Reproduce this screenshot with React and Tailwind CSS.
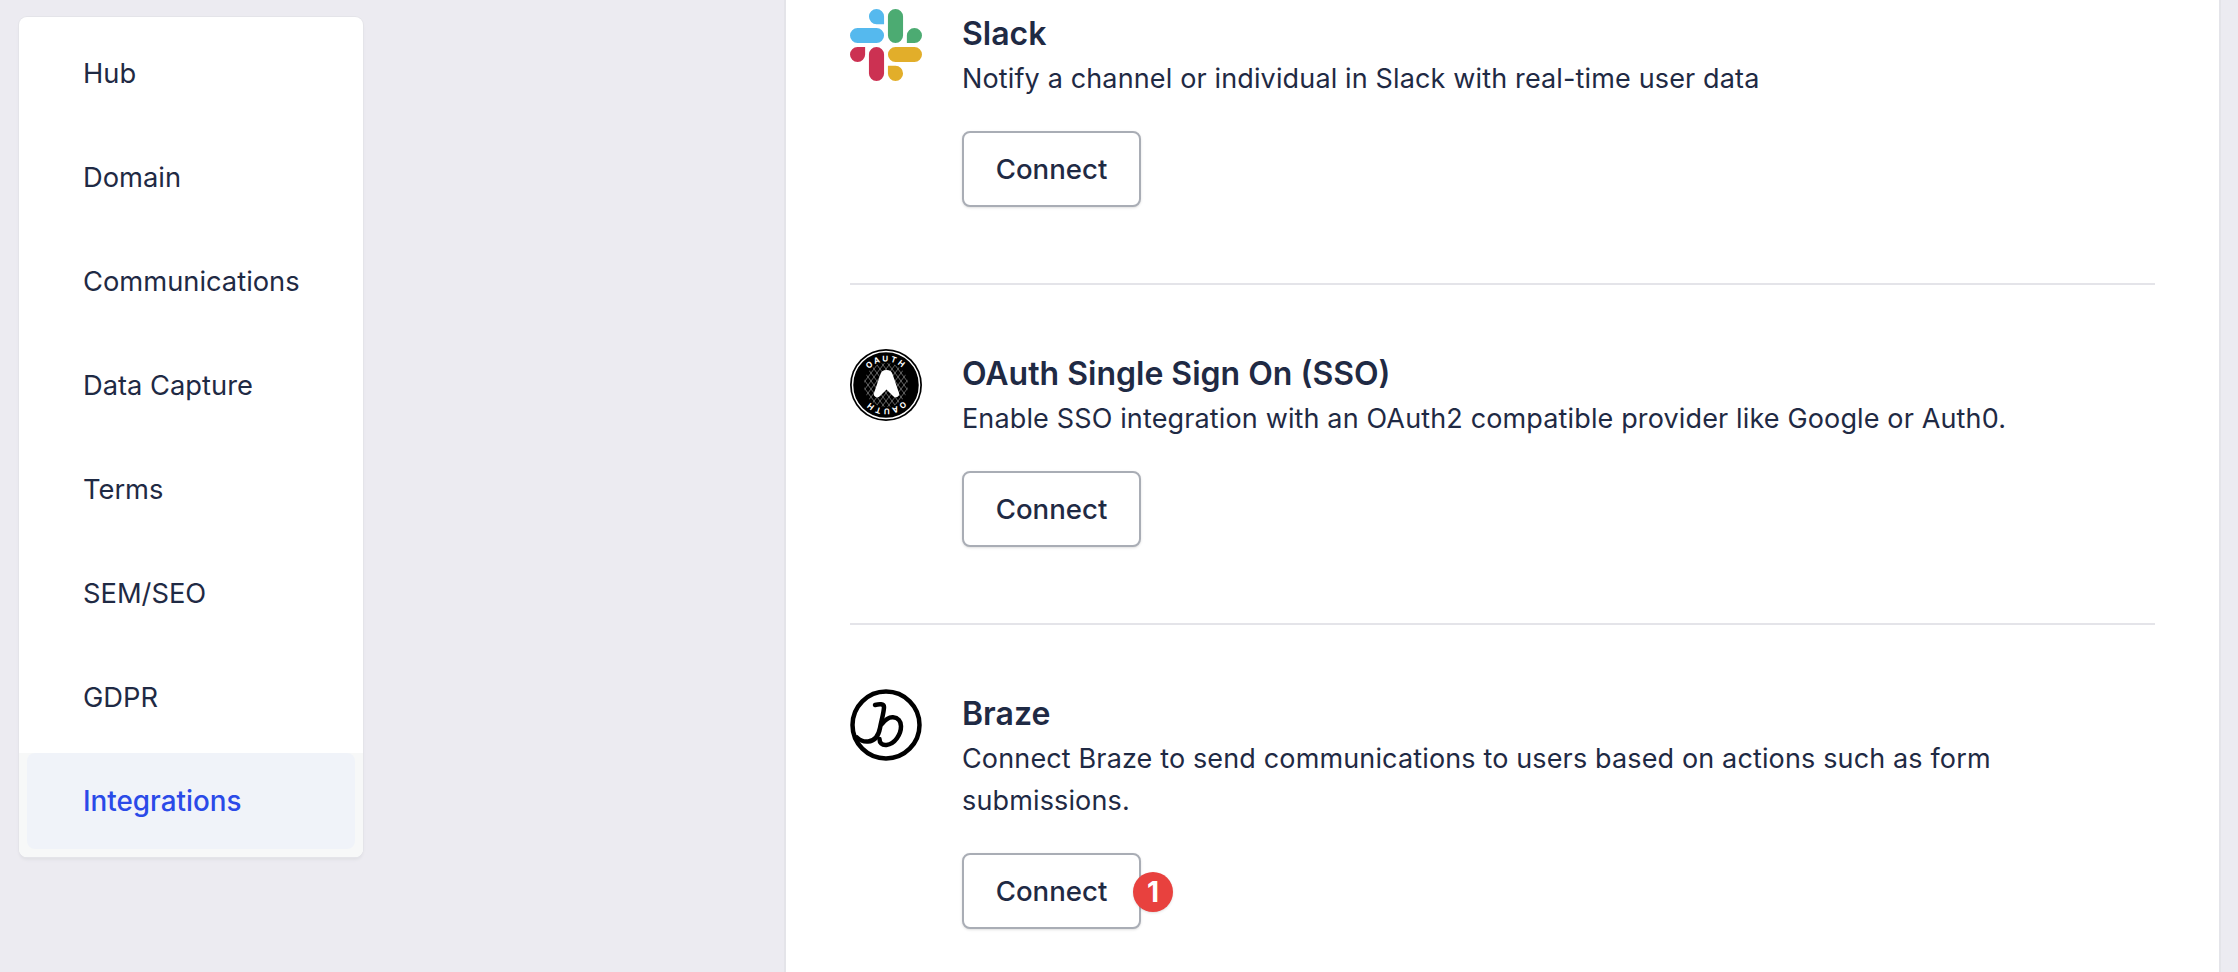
const NAV_ITEMS = ['Hub', 'Domain', 'Communications', 'Data Capture', 'Terms', 'SEM/SEO', 'GDPR', 'Integrations'];

function SlackLogo() {
    return (
        <svg viewBox="0 0 24 24" className="w-[72px] h-[72px]">
            <path fill="#cc3152" d="M5.042 15.165a2.528 2.528 0 0 1-2.52 2.523A2.528 2.528 0 0 1 0 15.165a2.527 2.527 0 0 1 2.522-2.52h2.52v2.52zM6.313 15.165a2.527 2.527 0 0 1 2.521-2.52 2.527 2.527 0 0 1 2.521 2.52v6.313A2.528 2.528 0 0 1 8.834 24a2.528 2.528 0 0 1-2.521-2.522v-6.313z" />
            <path fill="#55b9ee" d="M8.834 5.042a2.528 2.528 0 0 1-2.521-2.52A2.528 2.528 0 0 1 8.834 0a2.528 2.528 0 0 1 2.521 2.522v2.52H8.834zM8.834 6.313a2.528 2.528 0 0 1 2.521 2.521 2.528 2.528 0 0 1-2.521 2.521H2.522A2.528 2.528 0 0 1 0 8.834a2.528 2.528 0 0 1 2.522-2.521h6.312z" />
            <path fill="#4cab72" d="M18.956 8.834a2.528 2.528 0 0 1 2.522-2.521A2.528 2.528 0 0 1 24 8.834a2.528 2.528 0 0 1-2.522 2.521h-2.522V8.834zM17.688 8.834a2.528 2.528 0 0 1-2.523 2.521 2.527 2.527 0 0 1-2.52-2.521V2.522A2.527 2.527 0 0 1 15.165 0a2.528 2.528 0 0 1 2.523 2.522v6.312z" />
            <path fill="#e2ae2a" d="M15.165 18.956a2.528 2.528 0 0 1 2.523 2.522A2.528 2.528 0 0 1 15.165 24a2.527 2.527 0 0 1-2.52-2.522v-2.522h2.52zM15.165 17.688a2.527 2.527 0 0 1-2.52-2.523 2.526 2.526 0 0 1 2.52-2.52h6.313A2.527 2.527 0 0 1 24 15.165a2.528 2.528 0 0 1-2.522 2.523h-6.313z" />
        </svg>
    );
}

function OAuthLogo() {
    const mesh = [];
    for (let i = -30; i <= 30; i += 6) {
        mesh.push(<path key={`a${i}`} d={`M${36 + i - 18} 12 L${36 + i + 18} 60`} />);
        mesh.push(<path key={`b${i}`} d={`M${36 + i + 18} 12 L${36 + i - 18} 60`} />);
    }
    return (
        <svg viewBox="0 0 72 72" className="w-[72px] h-[72px]">
            <defs>
                <clipPath id="mesh-clip"><circle cx="36" cy="36" r="22" /></clipPath>
                <path id="oauth-top" d="M12.500 36a23.500 23.500 0 0 1 47 0" />
                <path id="oauth-bottom" d="M59.500 36a23.500 23.500 0 0 1-47 0" />
            </defs>
            <circle cx="36" cy="36" r="36" fill="#000" />
            <circle cx="36" cy="36" r="33.500" fill="none" stroke="#fff" strokeWidth="1.500" />
            <g clipPath="url(#mesh-clip)" stroke="#8e8e8e" strokeWidth="0.700" fill="none">{mesh}</g>
            <path d="M36.500 21c3.500 0 5 1.200 6 4l6.500 19c1.200 3.500-3.500 6-6 3l-6.500-6.500-6.500 6.500c-2.500 3-7.200.5-6-3l6.500-19c1-2.800 2.500-4 6-4z" fill="#fff" />
            <text fill="#fff" fontSize="8" fontWeight="700" letterSpacing="2" fontFamily="Inter, sans-serif" textAnchor="middle">
                <textPath href="#oauth-top" startOffset="50%">OAUTH</textPath>
            </text>
            <text fill="#fff" fontSize="8" fontWeight="700" letterSpacing="2" fontFamily="Inter, sans-serif" textAnchor="middle">
                <textPath href="#oauth-bottom" startOffset="50%">OAUTH</textPath>
            </text>
        </svg>
    );
}

function BrazeLogo() {
    return (
        <svg viewBox="0 0 72 72" className="w-[72px] h-[72px]" fill="none" stroke="#000" strokeWidth="4.500" strokeLinecap="round" strokeLinejoin="round">
            <circle cx="36" cy="36" r="33.500" />
            <path d="M25 16c4-1 9-1.500 9 2 0 5-2.500 13-4 21-1.500 8-5 13-12 13.500-4 .3-8-1-11-4" />
            <path d="M32 35c3-4 7-7 11-6.700 5 .4 8 4 8 9 0 8-6 17.700-14.500 18.700-4.500.5-7-2-7-6" />
        </svg>
    );
}

function Integration({ logo, title, description, badge }) {
    return (
        <div className="flex gap-[40px] pt-[64px] pb-[76px] border-b-2 border-[#e4e4e9] last:border-b-0">
            <div className="w-[72px] shrink-0">{logo}</div>
            <div className="flex-1 min-w-0">
                <h3 className="mt-[1px] text-[32px] leading-[48px] font-semibold">{title}</h3>
                <p className="max-w-[1100px] text-[27px] leading-[42px] tracking-[0.14px]">{description}</p>
                <div className="relative w-max mt-[31px]">
                    <button className="h-[76px] w-[179px] pt-[2px] bg-white border-2 border-[#a9adb5] rounded-lg text-[27.6px] font-medium shadow-sm">
                        Connect
                    </button>
                    {badge && (
                        <span className="absolute left-[171px] top-[19px] w-[40px] h-[40px] rounded-full bg-[#e8413e] text-white text-[28px] font-bold flex items-center justify-center shadow-sm">
                            {badge}
                        </span>
                    )}
                </div>
            </div>
        </div>
    );
}

export default function App() {
    return (
        <div className="flex h-screen w-full overflow-hidden bg-[#ecebf1] text-[#1f2a44] font-['Inter',sans-serif]">
            {/* Left nav */}
            <aside className="w-[784px] shrink-0 pl-[19px] pt-[17px]">
                <nav className="w-[344px] pt-[8px] bg-white rounded-lg shadow-[0_0_0_1px_#e4e4e9,0_3px_3px_#e0e0e5] overflow-hidden">
                    {NAV_ITEMS.map(item => {
                        const active = item === 'Integrations';
                        return (
                            <div key={item} className={active ? 'px-[8px] pb-[8px] bg-[#f7f8f8]' : 'px-[8px] pb-[8px]'}>
                                <a className={active
                                    ? 'flex items-center h-[96px] pl-[56px] pt-[2px] rounded-lg bg-[#f0f3f9] text-[#2a4ae8] text-[27.8px] font-medium'
                                    : 'flex items-center h-[96px] pl-[56px] pt-[2px] rounded-lg text-[27.3px]'}
                                >
                                    {item}
                                </a>
                            </div>
                        );
                    })}
                </nav>
            </aside>

            {/* Integrations panel, scrolled */}
            <main className="w-[1437px] shrink-0 h-full bg-white border-x-2 border-[#e4e4e9] px-[64px] overflow-hidden">
                <div className="-mt-[55px]">
                    <Integration
                        logo={<SlackLogo />}
                        title="Slack"
                        description="Notify a channel or individual in Slack with real-time user data"
                    />
                    <Integration
                        logo={<OAuthLogo />}
                        title="OAuth Single Sign On (SSO)"
                        description="Enable SSO integration with an OAuth2 compatible provider like Google or Auth0."
                    />
                    <Integration
                        logo={<BrazeLogo />}
                        title="Braze"
                        description="Connect Braze to send communications to users based on actions such as form submissions."
                        badge="1"
                    />
                </div>
            </main>
        </div>
    );
}
